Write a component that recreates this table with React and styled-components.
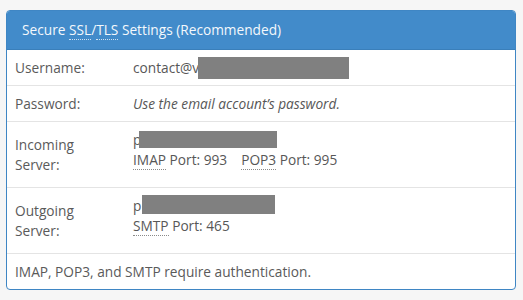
import React from 'react';
import styled, {createGlobalStyle} from 'styled-components';

const GlobalStyle = createGlobalStyle`
  html, body {
    margin: 0;
    padding: 0;
    background: #f6f6f6;
  }
  body {
    font-family: "Open Sans", "Liberation Sans", sans-serif;
    font-size: 13.7px;
    line-height: 20px;
    color: #5a5a5a;
  }
`;

const Page = styled.div`
  padding: 10px 7px 10px 6px;
`;

const Panel = styled.div`
  width: 508px;
  border: 1px solid #3f86c4;
  border-radius: 4px;
  background: #fff;
  overflow: hidden;
`;

const Heading = styled.div`
  background: #428bca;
  color: #f4f8fc;
  font-size: 13.7px;
  height: 38px;
  line-height: 38px;
  padding: 0 15px;
  border-bottom: 1px solid #3a7fba;
`;

const Row = styled.div`
  display: grid;
  grid-template-columns: 118px 1fr;
  border-bottom: 1px solid #e4e4e4;
`;

const Label = styled.div`
  padding: 8px 8px 7px;
  align-self: center;
`;

const Value = styled.div`
  position: relative;
  padding: 8px 8px 7px;
  color: #575757;
  font-style: ${p => (p.$italic ? 'italic' : 'normal')};
`;

const Lines = styled.div`
  margin-bottom: 10px;
`;

const Note = styled.div`
  padding: 8px 8px 7px;
`;

const Abbr = styled.abbr`
  text-decoration: none;
  border-bottom: 1px dotted ${p => (p.$light ? '#cfe0f0' : '#8a8a8a')};
  cursor: help;
`;

const Gap = styled.span`
  display: inline-block;
  width: 14px;
`;

const Redact = styled.span`
  position: absolute;
  background: #808080;
  left: ${p => p.$x}px;
  top: ${p => p.$y}px;
  width: ${p => p.$w}px;
  height: ${p => p.$h}px;
`;

const App = () => (
    <>
        <GlobalStyle/>
        <Page>
            <Panel>
                <Heading>
                    Secure <Abbr $light title="Secure Sockets Layer">SSL</Abbr>/<Abbr $light title="Transport Layer Security">TLS</Abbr> Settings (Recommended)
                </Heading>
                <Row>
                    <Label>Username:</Label>
                    <Value>
                        contact@v
                        <Redact $x={73} $y={7} $w={151} $h={22}/>
                    </Value>
                </Row>
                <Row>
                    <Label>Password:</Label>
                    <Value $italic>Use the email account’s password.</Value>
                </Row>
                <Row>
                    <Label>Incoming<br/>Server:</Label>
                    <Value>
                        <Lines>
                            p<br/>
                            <Abbr title="Internet Message Access Protocol">IMAP</Abbr> Port: 993<Gap/>
                            <Abbr title="Post Office Protocol 3">POP3</Abbr> Port: 995
                        </Lines>
                        <Redact $x={14} $y={9} $w={138} $h={17}/>
                    </Value>
                </Row>
                <Row>
                    <Label>Outgoing<br/>Server:</Label>
                    <Value>
                        <Lines>
                            p<br/>
                            <Abbr title="Simple Mail Transfer Protocol">SMTP</Abbr> Port: 465
                        </Lines>
                        <Redact $x={17} $y={7} $w={133} $h={19}/>
                    </Value>
                </Row>
                <Note>IMAP, POP3, and SMTP require authentication.</Note>
            </Panel>
        </Page>
    </>
);

export default App;
